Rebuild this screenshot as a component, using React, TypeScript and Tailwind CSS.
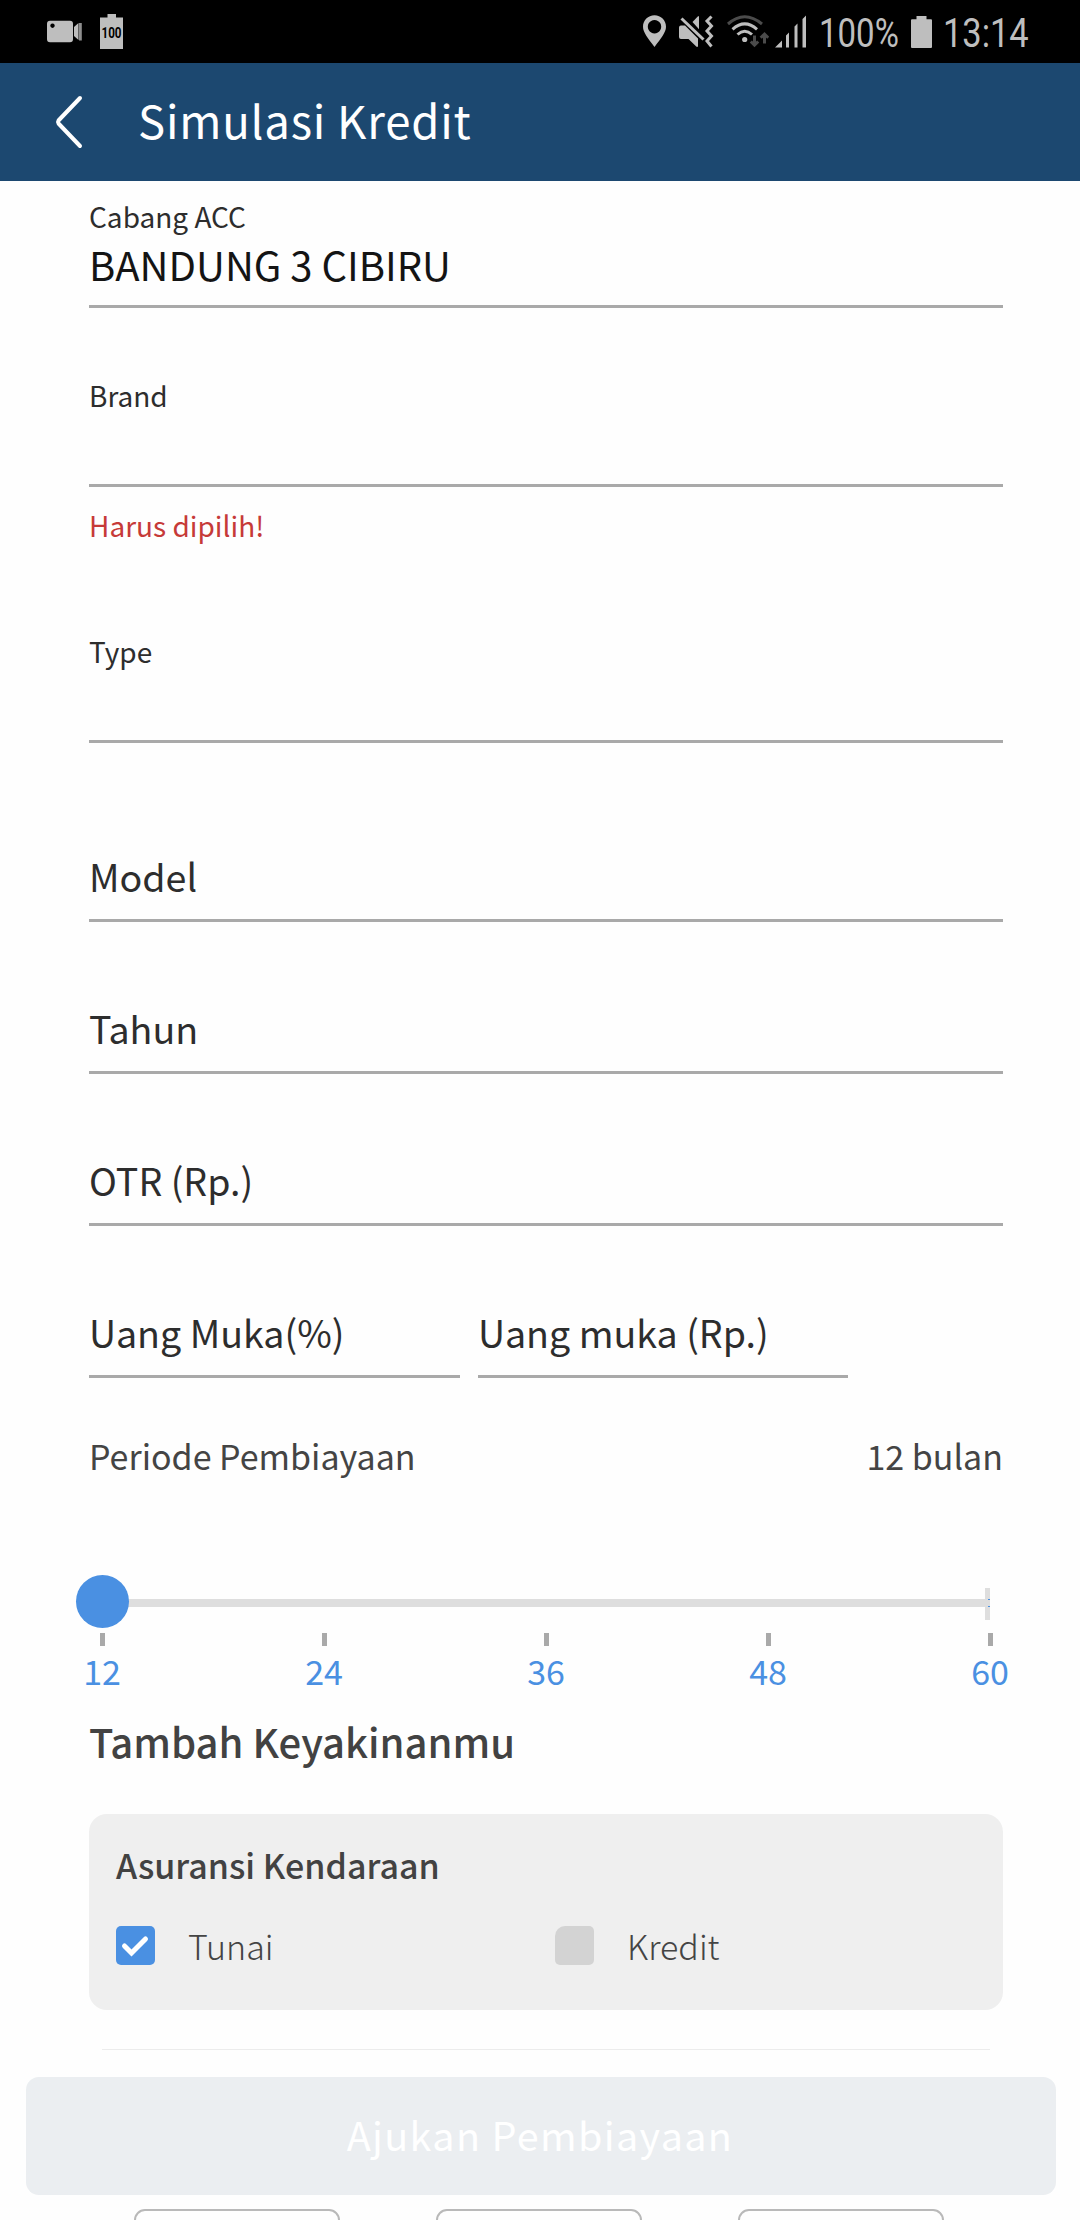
import type { ReactNode } from "react";

const ICON = "#bebebe";

function StatusBar() {
  return (
    <div className="flex h-[63px] shrink-0 items-start bg-black pl-[47px] font-[Roboto,sans-serif] text-[#bebebe]">
      <svg className="mt-[20px] shrink-0" width="35" height="23" viewBox="0 0 35 23" fill={ICON}>
        <path fillRule="evenodd" d="M3 0.7h20a3 3 0 0 1 3 3v15.6a3 3 0 0 1-3 3H3a3 3 0 0 1-3-3V3.700a3 3 0 0 1 3-3zM5.500 3.500a2.200 2.200 0 1 0 0.010 0z" />
        <path d="M27 7l4.500-4v17l-4.500-4z" />
        <path d="M32 3h2.800v17.500H32z" opacity="0.75" />
      </svg>
      <div className="relative ml-[18px] mt-[14px] h-[35px] w-[23px] shrink-0">
        <svg width="23" height="35" viewBox="0 0 23 35" fill={ICON}>
          <path d="M7.500 0h8.500v3.500h7V35H0V3.500h7.500z" />
        </svg>
        <span className="absolute -left-[4px] top-[11px] block w-[31px] origin-center scale-x-[0.83] text-center text-[14px] font-bold leading-[16px] text-black">100</span>
      </div>

      <svg className="ml-[520px] mt-[15px] shrink-0" width="23" height="32" viewBox="0 0 23 32" fill={ICON}>
        <path fillRule="evenodd" d="M11.500 0.300C17.900 0.300 23 5.300 23 11.700c0 5.800-5 11.300-11.500 20.300C5 23 0 17.500 0 11.700 0 5.300 5.100 0.300 11.500 0.300zM11.500 5a6.700 6.700 0 1 0 0.010 0z" />
      </svg>
      <svg className="ml-[13px] mt-[15px] shrink-0" width="35" height="33" viewBox="0 0 35 33" fill="none">
        <path d="M0 12.500q0-2 2-2h4L19 23.500v8.200h-1.500L9.500 24H2q-2 0-2-2z" fill={ICON} />
        <path d="M13.500 7L19 1.200h1v13z" fill={ICON} />
        <path d="M2.500 3.500L24.500 24.500" stroke={ICON} strokeWidth="3" />
        <path d="M32.500 1.500l-4.500 4.500 4.500 5-4.500 5 4.500 5-4.500 5 4.500 5.500" stroke={ICON} strokeWidth="3" />
      </svg>
      <svg className="ml-[13px] mt-[15px] shrink-0" width="42" height="33" viewBox="0 0 42 33" fill="none">
        <path d="M1 9Q17.500-5.500 35 9" stroke="#4b4b4b" strokeWidth="3" />
        <path d="M5.500 14.300Q17.700 3.500 30 14.300" stroke={ICON} strokeWidth="3" />
        <path d="M10.500 19.500Q17.700 13 25 19.500" stroke={ICON} strokeWidth="3" />
        <circle cx="17.700" cy="24.500" r="2.600" fill={ICON} />
        <path d="M27.500 20.500v9M23.800 26.500l3.700 3.700 3.700-3.700M37.500 28.500v-9M33.700 22.800l3.800-3.800 3.800 3.800" stroke="#4b4b4b" strokeWidth="3" />
      </svg>
      <svg className="ml-[6px] mt-[15px] shrink-0" width="32" height="33" viewBox="0 0 32 33" fill={ICON}>
        <path d="M0 32.500L7 25.500v7zM11 20.500l3-3v15h-3zM19.500 11.500l3-3v24h-3zM27.500 4l3.500-3.500v32h-3.500z" />
      </svg>
      <div className="ml-[12px] mt-[10px] w-[80px] shrink-0">
        <span className="inline-block origin-left scale-x-[0.825] whitespace-nowrap text-[40px] leading-[48px]">100%</span>
      </div>
      <svg className="ml-[12px] mt-[16px] shrink-0" width="21" height="32" viewBox="0 0 21 32" fill={ICON}>
        <path d="M5.500 0h10v3.200H20a1 1 0 0 1 1 1V31a1 1 0 0 1-1 1H1a1 1 0 0 1-1-1V4.200a1 1 0 0 1 1-1h4.500z" />
      </svg>
      <div className="ml-[11px] mt-[10px] w-[90px] shrink-0">
        <span className="inline-block origin-left scale-x-[0.86] whitespace-nowrap text-[40px] leading-[48px]">13:14</span>
      </div>
    </div>
  );
}

function Header() {
  return (
    <header className="flex h-[118px] shrink-0 items-center bg-[#1c4870] pl-[54px] text-white">
      <svg className="shrink-0" width="30" height="54" viewBox="0 0 30 54" fill="none" stroke="white" strokeWidth="4" strokeLinecap="round" strokeLinejoin="round">
        <path d="M26 3L4.500 25.500Q3.500 27 4.500 28.500L26 51" />
      </svg>
      <h1 className="mb-[6px] ml-[54px] text-[45.500px] leading-[64px] tracking-[0.800px]">Simulasi Kredit</h1>
    </header>
  );
}

function Field({ label, value, className }: { label: string; value?: string; className: string }) {
  return (
    <div className={`h-[112px] border-b-[3px] border-[#a9a9a9] ${className}`}>
      <div className="text-[28px] leading-[40px] text-[#2d2d2d]">{label}</div>
      {value && <div className="text-[40px] leading-[56px] text-[#141414]">{value}</div>}
    </div>
  );
}

function EmptyField({ children, className }: { children: ReactNode; className: string }) {
  return (
    <div className={`h-[75px] border-b-[3px] border-[#a9a9a9] pt-px text-[37.600px] leading-[56px] text-[#2d2d2d] ${className}`}>
      {children}
    </div>
  );
}

function Slider() {
  return (
    <div className="mt-[95px] h-[119px]">
      <div className="relative -ml-[13px] flex h-[53px] w-[914px] items-center">
        <div className="ml-[26px] mt-[3px] h-[8px] w-full bg-[#dedede]" />
        <div className="absolute right-0 top-[13px] h-[32px] w-[5px] bg-[#dedede]">
          <div className="absolute right-0 top-[11px] h-px w-[2px] bg-[#4a90e2]" />
          <div className="absolute right-0 top-[18px] h-px w-[2px] bg-[#4a90e2]" />
        </div>
        <div className="absolute left-0 top-0 size-[53px] rounded-full bg-[#4a90e2]" />
      </div>
      <div className="-mx-[98px] mt-[5px] grid grid-cols-[repeat(5,222px)]">
        {[12, 24, 36, 48, 60].map((n) => (
          <div key={n} className="flex flex-col items-center text-[34px] leading-[48px] text-[#4a90e2]">
            <div className="mb-px h-[13px] w-[5px] bg-[#a9a9a9]" />
            {n}
          </div>
        ))}
      </div>
    </div>
  );
}

function Option({ label, checked }: { label: string; checked?: boolean }) {
  return (
    <div className="flex w-[439px] shrink-0 items-center">
      {checked ? (
        <svg className="size-[39px] rounded-[5px] bg-[#4a90e2]" viewBox="0 0 39 39" fill="none">
          <path d="M8.500 20L15.500 27L29.500 13" stroke="white" strokeWidth="5" strokeLinecap="round" />
        </svg>
      ) : (
        <div className="size-[39px] rounded-[5px] rounded-tl-[10px] bg-[#d3d3d3]" />
      )}
      <span className="-my-2 ml-[33px] text-[34px] font-light leading-[48px] text-[#444]">{label}</span>
    </div>
  );
}

export default function App() {
  return (
    <div className="flex h-[2220px] w-[1080px] flex-col overflow-hidden bg-[#fefefe] font-['Noto_Sans_CJK_SC',sans-serif]">
      <StatusBar />
      <Header />
      <main className="mx-[89px] w-[914px] shrink-0 pt-[15px]">
        <Field className="" label="Cabang ACC" value="BANDUNG 3 CIBIRU" />
        <Field className="mt-[67px]" label="Brand" />
        <div className="mt-[18px] text-[28px] leading-[40px] text-[#c63a38]">Harus dipilih!</div>
        <Field className="mt-[86px]" label="Type" />
        <EmptyField className="mt-[104px]">Model</EmptyField>
        <EmptyField className="mt-[77px]">Tahun</EmptyField>
        <EmptyField className="mt-[77px]">OTR (Rp.)</EmptyField>
        <div className="mt-[77px] flex gap-[18px]">
          <EmptyField className="w-[371px]">Uang Muka(%)</EmptyField>
          <EmptyField className="w-[370px]">Uang muka (Rp.)</EmptyField>
        </div>
        <div className="mt-[54px] flex justify-between text-[34px] leading-[48px] text-[#444]">
          <span>Periode Pembiayaan</span>
          <span>12 bulan</span>
        </div>
        <Slider />
        <h2 className="mt-[17px] text-[40px] font-medium leading-[60px] text-[#424242]">Tambah Keyakinanmu</h2>
        <section className="mt-[43px] h-[196px] rounded-[18px] bg-[#efefef] px-[27px] pt-[27px]">
          <h3 className="text-[34px] font-medium leading-[48px] text-[#424242]">Asuransi Kendaraan</h3>
          <div className="mt-[37px] flex">
            <Option label="Tunai" checked />
            <Option label="Kredit" />
          </div>
        </section>
        <div className="mx-[13px] mt-[39px] h-px bg-[#ececec]" />
      </main>
      <button className="ml-[26px] mt-[27px] h-[118px] w-[1030px] shrink-0 rounded-[13px] bg-[#ebeef1] pb-[4px] pr-[2px] text-[39.500px] leading-[56px] tracking-[1.350px] text-white">
        Ajukan Pembiayaan
      </button>
      <div className="ml-[134px] mt-[14px] flex shrink-0 gap-[96px]">
        {[0, 1, 2].map((i) => (
          <div key={i} className="h-[60px] w-[206px] shrink-0 rounded-[11px] border-2 border-[#b9b9b9]" />
        ))}
      </div>
    </div>
  );
}
